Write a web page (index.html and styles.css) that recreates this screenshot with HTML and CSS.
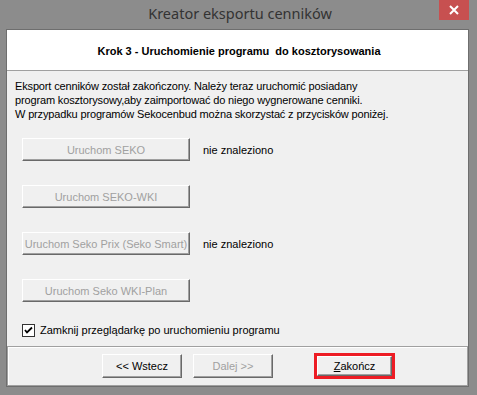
FILE: index.html
```html
<!DOCTYPE html>
<html lang="pl">
<head>
  <meta charset="UTF-8">
  <title>Kreator eksportu cenników</title>
  <link rel="stylesheet" href="styles.css">
</head>
<body>
  <div class="window">
    <div class="titlebar">
      <span></span>
      <span class="title">Kreator eksportu cenników</span>
      <span class="close">
        <svg width="10" height="10" viewBox="0 0 10 10"><path d="M1 1 L9 9 M9 1 L1 9" stroke="#fff" stroke-width="2"/></svg>
      </span>
    </div>
    <div class="client">
      <div class="header">Krok 3 - Uruchomienie programu&nbsp; do kosztorysowania</div>
      <div class="content">
        <p class="intro">Eksport cenników został zakończony. Należy teraz uruchomić posiadany<br>program kosztorysowy,aby zaimportować do niego wygnerowane cenniki.<br>W przypadku programów Sekocenbud można skorzystać z przycisków poniżej.</p>
        <div class="actions">
          <div class="action-row">
            <button class="btn btn-wide" disabled>Uruchom SEKO</button>
            <span class="status">nie znaleziono</span>
          </div>
          <div class="action-row">
            <button class="btn btn-wide" disabled>Uruchom SEKO-WKI</button>
          </div>
          <div class="action-row">
            <button class="btn btn-wide" disabled>Uruchom Seko Prix (Seko Smart)</button>
            <span class="status">nie znaleziono</span>
          </div>
          <div class="action-row">
            <button class="btn btn-wide" disabled>Uruchom Seko WKI-Plan</button>
          </div>
        </div>
        <label class="check">
          <span class="box"><svg width="11" height="11" viewBox="0 0 11 11"><path d="M2 5 L4 7.5 L9 2.5" fill="none" stroke="#000" stroke-width="1.8"/></svg></span>
          Zamknij przeglądarkę po uruchomieniu programu
        </label>
      </div>
      <div class="footer">
        <button class="btn">&lt;&lt; Wstecz</button>
        <button class="btn" disabled>Dalej &gt;&gt;</button>
        <span class="highlight"><button class="btn btn-inner"><u>Z</u>akończ</button></span>
      </div>
    </div>
  </div>
</body>
</html>
```

FILE: styles.css
```css
body {
  margin: 0;
  font-family: "Liberation Sans", Arial, sans-serif;
  font-size: 11px;
  color: #000;
}

.window {
  width: 477px;
  height: 395px;
  background-color: #8c8c8c;
  box-sizing: border-box;
  padding: 0 8px 0 6px;
  display: flex;
  flex-direction: column;
}

.titlebar {
  height: 29px;
  display: grid;
  grid-template-columns: 1fr auto 1fr;
  margin-right: -8px;
}

.title {
  font-family: "Noto Sans", sans-serif;
  font-size: 14.5px;
  color: #333;
  padding-top: 3px;
  padding-right: 3px;
}

.close {
  justify-self: end;
  margin-right: 8px;
  width: 30px;
  height: 20px;
  background-color: #c75050;
  display: flex;
  align-items: center;
  justify-content: center;
}

.client {
  height: 358px;
  box-sizing: border-box;
  border: 1px solid #6e6e6e;
  background-color: #f0f0f0;
  display: flex;
  flex-direction: column;
}

.header {
  height: 41px;
  box-sizing: border-box;
  background-color: #fff;
  border-bottom: 1px solid #a0a0a0;
  font-weight: bold;
  display: flex;
  align-items: center;
  justify-content: center;
  padding: 1px 0 0 3px;
}

.content {
  flex: 1;
  padding: 8px 0 0 8px;
}

.intro {
  margin: 0;
  line-height: 14px;
  letter-spacing: -0.15px;
}

.actions {
  margin-top: 17px;
  display: flex;
  flex-direction: column;
  gap: 24px;
}

.action-row {
  display: flex;
  align-items: center;
  gap: 13px;
  margin-left: 7px;
}

.btn {
  font-family: inherit;
  font-size: 11px;
  color: #000;
  background-color: #f0f0f0;
  border: 1px solid;
  border-color: #fff #696969 #696969 #fff;
  box-shadow: inset -1px -1px 0 #a0a0a0;
  width: 80px;
  height: 24px;
  padding: 0;
}

.btn:disabled {
  color: #a0a0a0;
}

.btn-wide {
  width: 168px;
  height: 23px;
}

.check {
  margin: 21px 0 0 7px;
  display: flex;
  align-items: center;
  gap: 5px;
  height: 14px;
}

.box {
  width: 11px;
  height: 11px;
  border: 1px solid #333;
  background-color: #fff;
  display: flex;
}

.footer {
  height: 40px;
  box-sizing: border-box;
  border: 1px solid #a0a0a0;
  box-shadow: inset 1px 1px 0 #fff;
  display: flex;
  align-items: center;
  padding-left: 94px;
  gap: 11px;
}

.highlight {
  margin-left: 30px;
  border: 3px solid #ed1c24;
  display: flex;
}

.btn-inner {
  width: 75px;
  height: 20px;
}
```
